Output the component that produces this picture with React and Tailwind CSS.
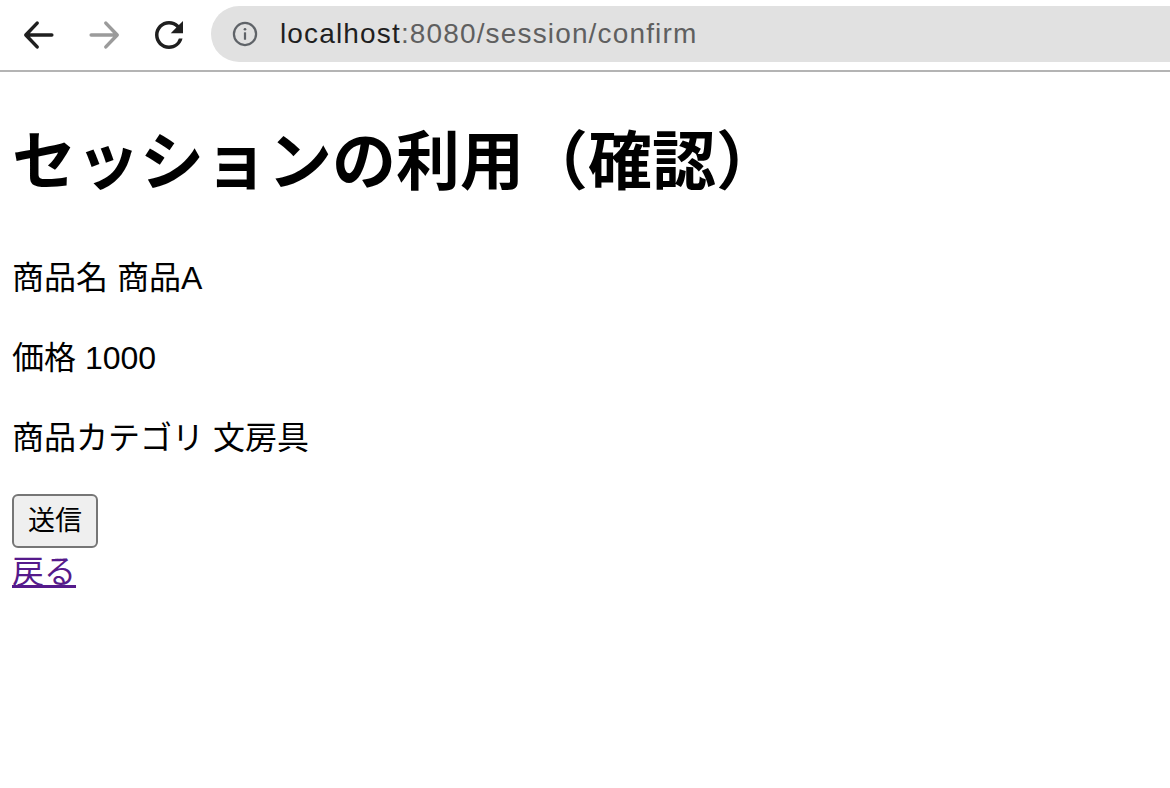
import React from "react";

const BackIcon = ({ color }) => (
  <svg width="44" height="44" viewBox="0 0 24 24" fill="none">
    <path
      d="M19 12H5M11 5.5L4.8 12l6.2 6.5"
      stroke={color}
      strokeWidth="1.9"
      strokeLinecap="round"
      strokeLinejoin="round"
    />
  </svg>
);

const ForwardIcon = ({ color }) => (
  <svg width="44" height="44" viewBox="0 0 24 24" fill="none">
    <path
      d="M5 12h14M13 5.5l6.2 6.5-6.2 6.5"
      stroke={color}
      strokeWidth="1.9"
      strokeLinecap="round"
      strokeLinejoin="round"
    />
  </svg>
);

const ReloadIcon = () => (
  <svg width="42" height="42" viewBox="0 0 24 24" fill="#1f1f1f">
    <path d="M17.65 6.35A7.96 7.96 0 0 0 12 4c-4.42 0-7.99 3.58-7.99 8s3.57 8 7.99 8c3.730 0 6.84-2.55 7.73-6h-2.08A5.99 5.99 0 0 1 12 18c-3.31 0-6-2.69-6-6s2.69-6 6-6c1.66 0 3.14.69 4.22 1.78L13 11h7V4l-2.35 2.35z" />
  </svg>
);

const InfoIcon = () => (
  <svg width="28" height="28" viewBox="0 0 24 24" fill="none">
    <circle cx="12" cy="12" r="9.5" stroke="#5f6368" strokeWidth="1.9" />
    <rect x="11.05" y="10.5" width="1.9" height="6.5" rx="0.5" fill="#5f6368" />
    <circle cx="12" cy="7.9" r="1.15" fill="#5f6368" />
  </svg>
);

export default function App() {
  const items = [
    { label: "商品名", value: "商品A" },
    { label: "価格", value: "1000" },
    { label: "商品カテゴリ", value: "文房具" },
  ];

  return (
    <div className="min-h-[788px] bg-white text-black">
      {/* Browser toolbar */}
      <div className="flex h-[72px] items-center border-b-2 border-[#b4b4b4] bg-white">
        <div className="ml-[17px] flex h-[44px] w-[44px] items-center justify-center">
          <BackIcon color="#1f1f1f" />
        </div>
        <div className="ml-[21px] flex h-[44px] w-[44px] items-center justify-center">
          <ForwardIcon color="#9b9b9b" />
        </div>
        <div className="ml-[21px] flex h-[44px] w-[44px] items-center justify-center">
          <ReloadIcon />
        </div>
        <div className="ml-[20px] mt-[6px] flex h-[56px] flex-1 items-center self-start rounded-l-full bg-[#e1e1e1] pl-[20px]">
          <InfoIcon />
          <span className="ml-[21px] font-['Liberation_Sans',sans-serif] text-[28px] leading-none tracking-[1.15px]">
            <span className="text-[#1f1f1f]">localhost</span>
            <span className="text-[#5f5f5f]">:8080/session/confirm</span>
          </span>
        </div>
      </div>

      {/* Page content */}
      <div className="px-[12px] font-['Liberation_Sans','Noto_Sans_CJK_JP',sans-serif]">
        <h1 className="mt-[42px] text-[64px] font-bold leading-[96px]">
          セッションの利用（確認）
        </h1>

        <div className="mt-[44px] flex flex-col gap-[32px]">
          {items.map((item) => (
            <p key={item.label} className="text-[32px] leading-[48px]">
              {item.label} {item.value}
            </p>
          ))}
        </div>

        <form className="mt-[32px]" onSubmit={(e) => e.preventDefault()}>
          <button
            type="submit"
            className="block h-[54px] rounded-[6px] border-2 border-[#767676] bg-[#efefef] px-[14px] text-[27px] leading-none"
          >
            送信
          </button>
        </form>
        <a
          href="#"
          className="block w-fit text-[32px] leading-[48px] text-[#551a8b] underline"
        >
          戻る
        </a>
      </div>
    </div>
  );
}
